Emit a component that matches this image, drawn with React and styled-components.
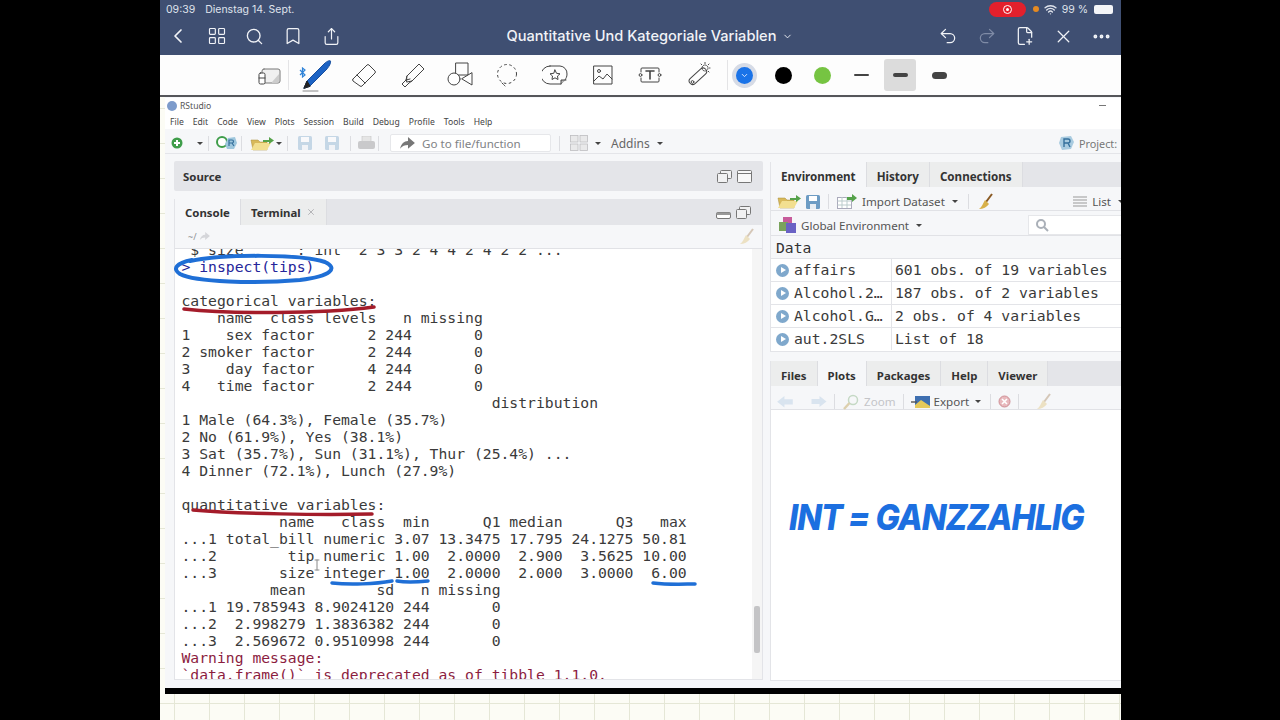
import React from 'react';
import styled, { createGlobalStyle } from 'styled-components';
import { ChevronLeft, LayoutGrid, Search, Bookmark, Share, Undo2, Redo2, FilePlus2, X, MoreHorizontal, ChevronDown, Wifi } from 'lucide-react';

const Global = createGlobalStyle`
  html, body { margin: 0; padding: 0; background: #000; overflow: hidden; }
  * { box-sizing: border-box; }
`;

const Page = styled.div`
  position: relative; width: 1280px; height: 720px; background: #000;
  display: flex; padding-left: 160px; overflow: hidden;
  font-family: "Noto Sans", sans-serif;
`;
const Tablet = styled.div`
  width: 961px; height: 720px; display: flex; flex-direction: column; overflow: hidden;
  background: #fcfcf5;
`;
const Header = styled.header`background: #3f4f72; color: #eef1f6; height: 55px; display: flex; flex-direction: column; flex: none;`;
const StatusBar = styled.div`
  height: 18px; display: flex; align-items: center; justify-content: space-between;
  padding: 0 8px 0 6px; font: 400 10.5px Inter, sans-serif; color: #dfe3ec;
`;
const StatusLeft = styled.div`display: flex; gap: 10px;`;
const StatusRight = styled.div`display: flex; align-items: center; gap: 5px;`;
const RecordPill = styled.div`
  width: 37px; height: 15px; border-radius: 8px; background: #e3202c;
  display: flex; align-items: center; justify-content: center; margin-right: 2px;
`;
const RecordDot = styled.span`
  width: 9px; height: 9px; border-radius: 50%; border: 1.5px solid #fff; display: flex; align-items: center; justify-content: center;
  &::after { content: ''; width: 3px; height: 3px; background: #fff; border-radius: 50%; }
`;
const OrangeDot = styled.span`width: 6px; height: 6px; border-radius: 50%; background: #e58a22;`;
const Battery = styled.span`width: 19px; height: 9px; background: #f4f5f8; border-radius: 2px; margin-left: 1px;`;
const NavBar = styled.div`flex: 1; display: flex; align-items: center; justify-content: space-between; padding-bottom: 1px;`;
const NavGroup = styled.div`display: flex; width: 192px; margin-left: ${p => p.$right ? 0 : -1}px;`;
const NavSlot = styled.div`width: 38.4px; display: flex; justify-content: center; align-items: center; color: ${p => p.$dim ? '#7f8ba6' : '#f1f3f7'};`;
const Title = styled.div`
  display: flex; align-items: center; gap: 6px; padding-left: 20px;
  font: 500 14.6px Inter, sans-serif; color: #f1f3f7; white-space: nowrap;
`;
const ToolTray = styled.div`
  height: 42px; flex: none; background: #fdfdfd; display: flex; align-items: center; padding-left: 85px;
  border-bottom: 2px solid #55565a;
`;
const ToolSlot = styled.div`width: 47.7px; display: flex; justify-content: center; align-items: center;`;
const TrayDivider = styled.div`width: 1px; height: 30px; background: #e4e4e6; margin: ${p => p.$m};`;
const ColorSlot = styled.div`
  width: 39px; height: 32px; display: flex; align-items: center; justify-content: center;
`;
const Swatch = styled.span`
  width: 17px; height: 17px; border-radius: 50%; background: ${p => p.$c};
  ${p => p.$ring && 'box-shadow: 0 0 0 4px #d6dbe6; display:flex; align-items:center; justify-content:center; color:#dbe8ff;'}
`;
const WidthBox = styled.span`
  width: 32px; height: 32px; border-radius: 3px; display: flex; align-items: center; justify-content: center;
  background: ${p => p.$on ? '#dcdcdc' : 'transparent'};
`;
const WidthBar = styled.span`width: ${p => p.$w}px; height: ${p => p.$h}px; border-radius: 4px; background: #444;`;

const Paper = styled.div`
  flex: 1; min-height: 0; padding-left: 5px; display: flex; flex-direction: column;
  background-color: #fcfcf5;
  background-image: linear-gradient(#e5e7d6 1px, transparent 1px), linear-gradient(90deg, #e5e7d6 1px, transparent 1px);
  background-size: 35px 35px;
  background-position: 0 11px, 14px 0;
`;
const RWindow = styled.div`
  width: 965px; height: 591px; background: #f6f7f9; display: flex; flex-direction: column; flex: none;
  color: #333;
`;
const TitleRow = styled.div`
  height: 15px; background: #fff; display: flex; align-items: center; gap: 3px; padding-left: 2px; margin-top: 1px;
  font: 400 8.6px "Noto Sans", sans-serif; color: #555; justify-content: space-between; padding-right: 24px;
`;
const TitleLeft = styled.div`display: flex; align-items: center; gap: 3px;`;
const AppDot = styled.span`width: 10px; height: 10px; border-radius: 50%; background: #7d9bcb;`;
const Minimize = styled.span`width: 7px; height: 1px; background: #777;`;
const MenuRow = styled.div`
  height: 16px; background: #fff; display: flex; align-items: center; gap: 9px; padding: 2px 0 0 5px;
  font: 400 8.6px "Noto Sans", sans-serif; color: #444;
`;
const ToolRow = styled.div`
  height: 23px; margin-top: 2px; border-bottom: 1px solid #e4e5e9; display: flex; align-items: center; padding: 2px 0 0 6px;
  font: 400 12px "Noto Sans", sans-serif; color: #666;
`;
const Spacer = styled.span`flex: none; width: ${p => p.$w}px;`;
const Sep = styled.span`width: 1px; height: 15px; background: #dcdde1; margin: 0 3px; flex: none;`;
const Caret = styled.span`
  width: 0; height: 0; border: 3px solid transparent; border-top: 3.5px solid #444; border-bottom: 0; margin: 0 2px; flex: none;
`;
const GoTo = styled.div`
  width: 161px; height: 18px; background: #fff; border: 1px solid #e6e7ea; border-radius: 2px; display: flex; align-items: center; gap: 7px;
  padding-left: 8px; color: #808285; font-size: 11.6px; flex: none;
`;
const ToolPush = styled.span`flex: 1;`;
const ProjectLabel = styled.div`display: flex; align-items: center; gap: 4px; color: #777; width: 71px; margin-right: 1px; white-space: nowrap; font-size: 10.8px;`;
const Panes = styled.div`
  flex: 1; min-height: 0; display: grid; grid-template-columns: 589px 360px; column-gap: 7px; padding: 7px 0 0 9px;
`;
const Column = styled.div`display: flex; flex-direction: column; min-height: 0; padding-top: ${p => p.$pt || 0}px;`;
const SourceBand = styled.div`
  height: 30px; background: #e4e5e9; border-radius: 2px; display: flex; align-items: center; justify-content: space-between;
  padding: 0 11px 0 9px; font: 700 11.4px "Noto Sans", sans-serif; color: #333; flex: none;
`;
const PaneButtons = styled.div`display: flex; align-items: center; gap: 5px;`;
const Pane = styled.section`
  background: #fff; display: flex; flex-direction: column; min-height: 0; margin-top: ${p => p.$mt || 0}px;
  height: ${p => p.$h}px; flex: none; border: 1px solid #e3e4e8; border-top: none; border-right-width: ${p => p.$nr ? 0 : 1}px;
`;
const TabBar = styled.div`
  height: ${p => p.$h || 26}px; background: #e4e5e9; display: flex; align-items: stretch; flex: none; justify-content: space-between; padding-right: 11px;
`;
const Tabs = styled.div`display: flex;`;
const Tab = styled.div`
  display: flex; align-items: center; gap: 5px; padding: ${p => p.$pt || 0}px ${p => p.$px || 10}px 0; white-space: nowrap;
  font: 700 ${p => p.$fs || 11.4}px "Noto Sans", sans-serif; color: #333;
  background: ${p => p.$on ? '#f6f7f9' : '#eceded'}; border-right: 1px solid #dcdde1;
`;
const PathBar = styled.div`
  height: 24px; background: #f6f7f9; border-bottom: 1px solid #e1e2e6; display: flex; align-items: center; justify-content: space-between;
  padding: 0 6px 0 13px; font-size: 9px; color: #8d8f93; flex: none;
`;
const PathLeft = styled.div`display: flex; align-items: center; gap: 2px;`;
const ConsoleBody = styled.div`position: relative; flex: 1; min-height: 0; overflow: hidden; padding-left: 6.5px;`;
const ConsoleText = styled.pre`
  margin: -8px 0 0 0; font: 400 14.72px/17px "DejaVu Sans Mono", monospace; color: #3a3a3a;
`;
const Line = styled.span`
  display: block; height: 17px;
  color: ${p => p.$c || 'inherit'};
`;
const Scroll = styled.div`
  position: absolute; right: 0; top: 0; bottom: 0; width: 10px; background: #f5f5f5;
  &::after { content: ''; position: absolute; left: 2px; right: 2px; top: 357px; height: 47px; background: #c4c4c6; border-radius: 2px; }
`;
const EnvTool = styled.div`
  height: ${p => p.$h}px; background: #f6f7f9; border-bottom: 1px solid #e1e2e6; display: flex; align-items: center; gap: ${p => p.$gap || 4}px; padding: ${p => p.$pt || 2}px ${p => p.$pr || 8}px 0 ${p => p.$pl || 8}px;
  font: 400 11.6px "Noto Sans", sans-serif; color: #555; flex: none; white-space: nowrap;
`;
const SearchBox = styled.div`
  width: 96px; height: 20px; background: #fff; border: 1px solid #e6e7ea; display: flex; align-items: center; padding-left: 6px; margin-right: -2px;
`;
const DataHead = styled.div`
  height: 22px; background: #f6f7f9; font: 400 14.72px/23px "DejaVu Sans Mono", monospace; padding-left: 5px; color: #333; flex: none;
`;
const EnvRow = styled.div`
  height: 23px; display: grid; grid-template-columns: 121px 1fr; border-top: 1px solid #e3e4e8; background: #fff;
  font: 400 14.72px/22px "DejaVu Sans Mono", monospace; color: #3a3a3a; flex: none; white-space: nowrap;
`;
const EnvName = styled.div`display: flex; align-items: center; gap: 5px; padding-left: 5px; border-right: 1px solid #e3e4e8;`;
const EnvValue = styled.div`padding-left: 3px;`;
const RowDot = styled.span`
  width: 13px; height: 13px; border-radius: 50%; background: #7fa8cc; display: flex; align-items: center; justify-content: center; flex: none;
  &::after { content: ''; border-left: 5px solid #fff; border-top: 3.5px solid transparent; border-bottom: 3.5px solid transparent; margin-left: 2px; }
`;
const Push = styled.span`flex: 1;`;
const Zoomed = styled.span`color: #c4c5c8;`;
const PlotArea = styled.div`
  flex: 1; background: #fff; padding: 89px 0 0 18px; overflow: hidden;
`;
const Ink = styled.div`
  font: italic 800 36px/36px Inter, sans-serif; color: #1c6fe0; white-space: nowrap; letter-spacing: -1.1px;
  transform-origin: 0 50%; transform: scaleX(0.9);
`;
const Marks = styled.svg`position: absolute; left: 0; top: 0; pointer-events: none;`;
const BlackRule = styled.div`height: 6px; width: 100%; background: #000; flex: none;`;
const BtPos = styled.div`position: absolute; left: 299px; top: 61px;`;

const G = ({ s = 20, w, h, children, vb }) => (
  <svg width={w || s} height={h || s} viewBox={vb || `0 0 ${s} ${s}`} fill="none" stroke="#444" strokeWidth="1" strokeLinecap="round" strokeLinejoin="round">{children}</svg>
);

const PageSwitch = () => <G s={24}><rect x="5" y="6" width="18" height="14" rx="2" fill="#f0f0f0" stroke="#777" /><path d="M15 19 L22 11 V18 a2 2 0 0 1-2 2 H15Z" fill="#ccc" stroke="none" /><rect x="2" y="10" width="6" height="11" rx="1.5" fill="#fff" /><path d="M2 15 H8" /></G>;
const Pen = () => (
  <G w={34} h={36} vb="0 0 34 36">
    <path d="M3 34 H18" stroke="#888" />
    <path d="M4 31 L7 24 L24 7 C27 4 30 3 30.5 4 C31 6 29 10 26 13 L10 29 Z" fill="#1d63c4" stroke="#174f9f" />
    <path d="M4 31 L7 24 L10 29Z" fill="#222" stroke="#222" />
  </G>
);
const Bt = () => <svg width="7" height="11" viewBox="0 0 7 11" fill="none" stroke="#2f83d8" strokeWidth="1.2"><path d="M1 3 L6 8 L3.5 10 V1 L6 3 L1 8" /></svg>;
const Eraser = () => <G s={26}><path d="M2 17 L16 3 a1.5 1.5 0 0 1 2 0 L24 9 a1.5 1.5 0 0 1 0 2 L11 24 a1.5 1.5 0 0 1-2 0 L2 19 a1.5 1.5 0 0 1 0-2Z" /><path d="M6 13 L14 21" /></G>;
const Highlighter = () => <G s={26}><path d="M8 14 L20 2 L25 7 L13 19 L8 20Z" /><path d="M8 14 L7 18 L3 22 L6 25 L10 21 L13 19" /><path d="M11 17 L7 18" /></G>;
const Shapes = () => <G s={26}><rect x="9" y="1" width="12" height="12" /><circle cx="7" cy="17" r="6" fill="#fff" /><path d="M25 11 V23 L15 17Z" fill="#fff" /></G>;
const Lasso = () => <G s={24}><ellipse cx="12" cy="11" rx="9.5" ry="9.5" strokeDasharray="2.6 2.6" strokeLinecap="butt" /><path d="M7 20 L10 23" strokeDasharray="2 1.5" /></G>;
const Sticker = () => <G w={26} h={22} vb="0 0 26 22"><path d="M8 2 H18 a7.5 7.5 0 0 1 7 8 c0 3 -1 4 -2 6 l-4 4 H8 a8 8 0 0 1 0-18Z" /><path d="M13 6 L14.5 9.3 L18 9.8 L15.5 12 L16 15.5 L13 13.8 L10 15.5 L10.5 12 L8 9.8 L11.5 9.3Z" /><path d="M19 20 V16 H24" fill="#bbb" /></G>;
const ImageIco = () => <G s={22}><rect x="2" y="2" width="18" height="18" /><circle cx="7" cy="7" r="1.5" /><path d="M2 17 L7 12 L11 15 L15 10 L20 15" /></G>;
const TextBox = () => <G w={24} h={20} vb="0 0 24 20"><path d="M3 7 V4 a1 1 0 0 1 1-1 H20 a1 1 0 0 1 1 1 V7 M3 13 V16 a1 1 0 0 0 1 1 H20 a1 1 0 0 0 1-1 V13" /><circle cx="2.5" cy="10" r="1.4" /><circle cx="21.5" cy="10" r="1.4" /><path d="M8 6 H16 M12 6 V14" strokeWidth="1.6" /></G>;
const Magic = () => <G s={26}><rect x="-1" y="0" width="21" height="7" rx="3.5" transform="translate(3.5 18) rotate(-42)" /><circle cx="7.5" cy="20" r="1.4" /><circle cx="20" cy="6" r="3" strokeDasharray="1 1" /><path d="M20 0.5 V1.5 M25 6 H24.5 M24 2 L23.3 2.7 M16 2 L16.7 2.7 M24 10 L23.3 9.3" /></G>;

const AddIcon = () => <svg width="12" height="12" viewBox="0 0 12 12" style={{ flex: 'none' }}><circle cx="6" cy="6" r="5.5" fill="#3f9d4a" /><path d="M3 6 H9 M6 3 V9" stroke="#fff" strokeWidth="2" /></svg>;
const ProjectIcon = () => <svg width="22" height="16" viewBox="0 0 22 16" style={{ flex: 'none' }}><circle cx="6" cy="7" r="5" fill="#fff" stroke="#3f9d4a" strokeWidth="2" /><path d="M12 3 L19 2 L21 8 L18 14 L11 14 L9 9Z" fill="#9fc7dd" /><path d="M13 11 V5 H16 a1.5 1.5 0 0 1 0 3 H13 M16 8 L18 11" stroke="#35709c" strokeWidth="1.2" fill="none" /></svg>;
const ProjectIcon2 = () => <svg width="17" height="16" viewBox="0 0 17 16" style={{ flex: 'none' }}><path d="M3 2 L13 1 L16 7 L13 14 L4 15 L1 8Z" fill="#a9cbe0" /><path d="M6 12 V4 H10 a2 2 0 0 1 0 4 H6 M10 8 L12 12" stroke="#35709c" strokeWidth="1.4" fill="none" /></svg>;
const Folder = () => <svg width="24" height="15" viewBox="0 0 24 15" style={{ flex: 'none' }}><path d="M1 4 H8 L10 6 H17 V14 H3Z" fill="#d8b95a" stroke="#a88c3a" strokeWidth=".5" /><path d="M1 14 L5 7 H21 L17 14Z" fill="#f2df90" /><path d="M13 4 H19 V1 L24 4.5 L19 8 V6 H13Z" fill="#55a24a" /></svg>;
const Save = ({ dim }) => <svg width="14" height="14" viewBox="0 0 14 14" opacity={dim ? .35 : 1} style={{ flex: 'none' }}><rect width="14" height="14" rx="1.5" fill="#6d9cc4" /><rect x="3" y="1" width="8" height="5" fill="#fff" /><rect x="4" y="9" width="6" height="5" fill="#e9eef4" /></svg>;
const Printer = () => <svg width="17" height="14" viewBox="0 0 17 14" style={{ flex: 'none' }}><rect x="4" y="0" width="9" height="6" fill="#e5e5e5" stroke="#c2c2c2" strokeWidth=".6" /><rect x="0" y="5" width="17" height="8" rx="2" fill="#c9c9cb" /></svg>;
const Arrow = ({ c = '#777', w = 16, flip }) => <svg width={w} height={w * .8} viewBox="0 0 16 13" style={{ flex: 'none' }}><path d={flip ? 'M0 6.5 L7 1 V4 H15 V9 H7 V12Z' : 'M1 12 C2 7 5 4 9 4 V0 L16 6 L9 12 V8 C6 8 3 9 1 12Z'} fill={c} /></svg>;
const ArrowR = ({ c }) => <svg width="17" height="13" viewBox="0 0 16 13" style={{ flex: 'none' }}><path d="M16 6.5 L9 1 V4 H1 V9 H9 V12Z" fill={c} /></svg>;
const Layout = () => <svg width="18" height="16" viewBox="0 0 18 16" fill="#e9e9ea" stroke="#bdbdc0" strokeWidth=".8" style={{ flex: 'none' }}><rect x=".5" y=".5" width="7.5" height="6.5" /><rect x="10" y=".5" width="7.5" height="6.5" /><rect x=".5" y="9" width="7.5" height="6.5" /><rect x="10" y="9" width="7.5" height="6.5" /></svg>;
const PaneBtns = ({ first }) => (
  <PaneButtons>
    {first === 'min'
      ? <svg width="15" height="7" viewBox="0 0 15 7" style={{ marginTop: 6 }}><rect x=".5" y=".5" width="14" height="6" rx="1.5" fill="#fff" stroke="#777" /><rect x=".5" y=".5" width="14" height="2.5" fill="#999" /></svg>
      : <svg width="15" height="13" viewBox="0 0 15 13" fill="#f1f1f2" stroke="#777"><rect x="3.5" y=".5" width="11" height="8" rx="1" /><rect x=".5" y="3.5" width="10" height="9" rx="1" /></svg>}
    {first === 'min'
      ? <svg width="15" height="13" viewBox="0 0 15 13" fill="#f1f1f2" stroke="#777"><rect x="3.5" y=".5" width="11" height="8" rx="1" /><rect x=".5" y="3.5" width="10" height="9" rx="1" /></svg>
      : <svg width="15" height="13" viewBox="0 0 15 13" fill="#f8f8f8" stroke="#777"><rect x=".5" y=".5" width="14" height="12" rx="1" /><path d="M1 3.5 H14" /></svg>}
  </PaneButtons>
);
const Broom = ({ dim }) => <svg width="18" height="18" viewBox="0 0 18 18" opacity={dim ? .3 : 1} style={{ flex: 'none' }}><path d="M15 1 L9 9" stroke="#8a5a24" strokeWidth="2" /><path d="M8 7 L12 11 C10 14 6 16 2 16 C5 14 6 10 8 7Z" fill="#d8b14a" /></svg>;
const Table = () => <svg width="20" height="15" viewBox="0 0 20 15" style={{ flex: 'none' }}><rect x=".5" y="3.5" width="14" height="11" fill="#fff" stroke="#aab" /><path d="M.5 7 H14 M.5 11 H14 M5 3 V14 M10 3 V14" stroke="#bcc" /><path d="M10 3 H15 V0 L20 4 L15 8 V6 H10Z" fill="#55a24a" /></svg>;
const Cube = () => <svg width="17" height="16" viewBox="0 0 17 16" style={{ flex: 'none' }}><rect x="4" y="0" width="9" height="9" fill="#c75b9b" /><rect x="0" y="5" width="9" height="9" fill="#7aa35c" /><rect x="7" y="6" width="10" height="10" fill="#6a62c4" /></svg>;
const ListIco = () => <svg width="14" height="11" viewBox="0 0 14 11" stroke="#999" style={{ flex: 'none' }}><path d="M0 1 H14 M0 4 H14 M0 7 H14 M0 10 H14" /></svg>;
const Lens = () => <svg width="14" height="14" viewBox="0 0 14 14" fill="none" stroke="#aab0b8" strokeWidth="2"><circle cx="6" cy="6" r="4" /><path d="M9 9 L13 13" /></svg>;
const ExportIco = () => <svg width="19" height="14" viewBox="0 0 19 14" style={{ flex: 'none' }}><rect x="4" y="1" width="15" height="12" fill="#3e6fb0" /><path d="M4 10 L10 5 L19 11 V13 H4Z" fill="#e5c95a" /><path d="M0 7 H6" stroke="#555" strokeWidth="1.4" /></svg>;
const DeleteIco = () => <svg width="13" height="13" viewBox="0 0 13 13" style={{ flex: 'none' }}><circle cx="6.5" cy="6.5" r="5.5" fill="#e8b9bd" stroke="#cf8f95" /><path d="M4 4 L9 9 M9 4 L4 9" stroke="#fff" strokeWidth="1.6" /></svg>;
const ZoomIco = () => <svg width="18" height="16" viewBox="0 0 18 16" fill="none" style={{ flex: 'none' }}><circle cx="11" cy="6" r="4.5" stroke="#c5d9c5" strokeWidth="1.5" /><path d="M7.5 9 L2 15" stroke="#ddd0ae" strokeWidth="2.5" /></svg>;

const menu = ['File', 'Edit', 'Code', 'View', 'Plots', 'Session', 'Build', 'Debug', 'Profile', 'Tools', 'Help'];
const consoleLines = [
  [' $ size      : int  2 3 3 2 4 4 2 4 2 2 ...'],
  ['> inspect(tips)', '#25259a'],
  [' '],
  ['categorical variables:'],
  ['    name  class levels   n missing'],
  ['1    sex factor      2 244       0'],
  ['2 smoker factor      2 244       0'],
  ['3    day factor      4 244       0'],
  ['4   time factor      2 244       0'],
  ['                                   distribution'],
  ['1 Male (64.3%), Female (35.7%)'],
  ['2 No (61.9%), Yes (38.1%)'],
  ['3 Sat (35.7%), Sun (31.1%), Thur (25.4%) ...'],
  ['4 Dinner (72.1%), Lunch (27.9%)'],
  [' '],
  ['quantitative variables:'],
  ['           name   class  min      Q1 median      Q3   max'],
  ['...1 total_bill numeric 3.07 13.3475 17.795 24.1275 50.81'],
  ['...2        tip numeric 1.00  2.0000  2.900  3.5625 10.00'],
  ['...3       size integer 1.00  2.0000  2.000  3.0000  6.00'],
  ['          mean        sd   n missing'],
  ['...1 19.785943 8.9024120 244       0'],
  ['...2  2.998279 1.3836382 244       0'],
  ['...3  2.569672 0.9510998 244       0'],
  ['Warning message:', '#8c1d3f'],
  ['`data.frame()` is deprecated as of tibble 1.1.0.', '#8c1d3f'],
];
const envRows = [
  ['affairs', '601 obs. of 19 variables'],
  ['Alcohol.2…', '187 obs. of 2 variables'],
  ['Alcohol.G…', '2 obs. of 4 variables'],
  ['aut.2SLS', 'List of 18'],
];

export default function App() {
  return (
    <Page>
      <Global />
      <Tablet>
        <Header>
          <StatusBar>
            <StatusLeft><span>09:39</span><span>Dienstag 14. Sept.</span></StatusLeft>
            <StatusRight>
              <RecordPill><RecordDot /></RecordPill>
              <OrangeDot />
              <Wifi size={13} strokeWidth={2.6} />
              <span>99 %</span>
              <Battery />
            </StatusRight>
          </StatusBar>
          <NavBar>
            <NavGroup>
              <NavSlot><ChevronLeft size={24} strokeWidth={1.7} /></NavSlot>
              <NavSlot><LayoutGrid size={20} strokeWidth={1.4} /></NavSlot>
              <NavSlot><Search size={19} strokeWidth={1.7} /></NavSlot>
              <NavSlot><Bookmark size={20} strokeWidth={1.5} /></NavSlot>
              <NavSlot><Share size={19} strokeWidth={1.5} /></NavSlot>
            </NavGroup>
            <Title>Quantitative Und Kategoriale Variablen <ChevronDown size={11} /></Title>
            <NavGroup $right>
              <NavSlot><Undo2 size={20} strokeWidth={1.5} /></NavSlot>
              <NavSlot $dim><Redo2 size={20} strokeWidth={1.5} /></NavSlot>
              <NavSlot><FilePlus2 size={20} strokeWidth={1.5} /></NavSlot>
              <NavSlot><X size={21} strokeWidth={1.5} /></NavSlot>
              <NavSlot><MoreHorizontal size={21} strokeWidth={2.4} /></NavSlot>
            </NavGroup>
          </NavBar>
        </Header>
        <ToolTray>
          <ToolSlot><PageSwitch /></ToolSlot>
          <TrayDivider $m="0 4px 0 -5px" />
          <ToolSlot><Pen /></ToolSlot>
          <ToolSlot><Eraser /></ToolSlot>
          <ToolSlot><Highlighter /></ToolSlot>
          <ToolSlot><Shapes /></ToolSlot>
          <ToolSlot><Lasso /></ToolSlot>
          <ToolSlot><Sticker /></ToolSlot>
          <ToolSlot><ImageIco /></ToolSlot>
          <ToolSlot><TextBox /></ToolSlot>
          <ToolSlot><Magic /></ToolSlot>
          <TrayDivider $m="0 -3px 0 5px" />
          <ColorSlot><Swatch $c="#1a73e8" $ring><ChevronDown size={9} strokeWidth={2.5} /></Swatch></ColorSlot>
          <ColorSlot><Swatch $c="#000" /></ColorSlot>
          <ColorSlot><Swatch $c="#76c442" /></ColorSlot>
          <ColorSlot><WidthBox><WidthBar $w={15} $h={2.5} /></WidthBox></ColorSlot>
          <ColorSlot><WidthBox $on><WidthBar $w={15} $h={4} /></WidthBox></ColorSlot>
          <ColorSlot><WidthBox><WidthBar $w={15} $h={7} /></WidthBox></ColorSlot>
        </ToolTray>
        <Paper>
          <RWindow>
            <TitleRow>
              <TitleLeft><AppDot />RStudio</TitleLeft>
              <Minimize />
            </TitleRow>
            <MenuRow>{menu.map(m => <span key={m}>{m}</span>)}</MenuRow>
            <ToolRow>
              <AddIcon /><Spacer $w={12} /><Caret /><Sep /><Spacer $w={4} />
              <ProjectIcon /><Sep /><Spacer $w={5} />
              <Folder /><Caret /><Sep /><Spacer $w={7} />
              <Save dim /><Spacer $w={13} /><Save dim /><Spacer $w={8} /><Sep /><Spacer $w={4} />
              <Printer /><Sep /><Spacer $w={8} />
              <GoTo><Arrow />Go to file/function</GoTo><Spacer $w={5} /><Sep /><Spacer $w={7} />
              <Layout /><Spacer $w={5} /><Caret /><Spacer $w={8} />Addins<Spacer $w={5} /><Caret />
              <ToolPush />
              <ProjectLabel><ProjectIcon2 />Project:</ProjectLabel>
            </ToolRow>
            <Panes>
              <Column>
                <SourceBand>Source<PaneBtns /></SourceBand>
                <Pane $mt={8} $h={481}>
                  <TabBar>
                    <Tabs>
                      <Tab $on>Console</Tab>
                      <Tab>Terminal <X size={10} color="#a9a9ad" strokeWidth={2} /></Tab>
                    </Tabs>
                    <PaneBtns first="min" />
                  </TabBar>
                  <PathBar>
                    <PathLeft>~/<Arrow c="#d5d6da" w={11} /></PathLeft>
                    <Broom dim />
                  </PathBar>
                  <ConsoleBody>
                    <ConsoleText>
                      {consoleLines.map(([t, c], i) => <Line key={i} $c={c}>{t}</Line>)}
                    </ConsoleText>
                    <Scroll />
                  </ConsoleBody>
                </Pane>
              </Column>
              <Column $pt={1}>
                <Pane $h={190} $nr>
                  <TabBar $h={25}>
                    <Tabs>
                      <Tab $on $fs={11.6} $pt={3}>Environment</Tab>
                      <Tab $fs={11.6} $pt={3}>History</Tab>
                      <Tab $fs={11.6} $pt={3}>Connections</Tab>
                    </Tabs>
                  </TabBar>
                  <EnvTool $h={24} $gap={5} $pl={6} $pt={6} $pr={4}>
                    <Folder /><Save /><Sep /><Table />Import Dataset<Caret /><Sep /><Broom />
                    <Push /><ListIco />List<Caret />
                  </EnvTool>
                  <EnvTool $h={25} $gap={5} $pl={8} $pt={4}>
                    <Cube />Global Environment<Caret />
                    <Push /><SearchBox><Lens /></SearchBox>
                  </EnvTool>
                  <DataHead>Data</DataHead>
                  {envRows.map(([a, b]) => (
                    <EnvRow key={a}>
                      <EnvName><RowDot />{a}</EnvName>
                      <EnvValue>{b}</EnvValue>
                    </EnvRow>
                  ))}
                </Pane>
                <Pane $mt={9} $h={320} $nr>
                  <TabBar $h={25}>
                    <Tabs>
                      <Tab $pt={3}>Files</Tab>
                      <Tab $on $pt={3}>Plots</Tab>
                      <Tab $pt={3}>Packages</Tab>
                      <Tab $pt={3}>Help</Tab>
                      <Tab $pt={3}>Viewer</Tab>
                    </Tabs>
                  </TabBar>
                  <EnvTool $h={24} $gap={4} $pl={6} $pt={8}>
                    <Arrow flip c="#d9e4ef" w={17} /><Spacer $w={8} /><ArrowR c="#d9e4ef" /><Sep /><ZoomIco /><Zoomed>Zoom</Zoomed><Sep /><ExportIco />Export<Caret /><Sep /><DeleteIco /><Sep /><Spacer $w={5} /><Broom dim />
                  </EnvTool>
                  <PlotArea><Ink>INT = GANZZAHLIG</Ink></PlotArea>
                </Pane>
              </Column>
            </Panes>
          </RWindow>
          <BlackRule />
        </Paper>
      </Tablet>
      <Marks width="1280" height="720" viewBox="0 0 1280 720" fill="none" strokeLinecap="round">
        <path d="M190 261 C225 254 300 254 325 262 C338 268 332 276 300 280 C255 284 195 282 180 274 C172 269 176 263 192 260" stroke="#1f6fd6" strokeWidth="4" />
        <path d="M184 309 C230 314 320 314 374 307" stroke="#a41c2a" strokeWidth="3.5" />
        <path d="M193 510 C240 514 320 515 372 514" stroke="#a41c2a" strokeWidth="3.5" />
        <path d="M332 583 C350 585 375 584 392 581" stroke="#1f6fd6" strokeWidth="3.5" />
        <path d="M397 581 C408 583 418 582 428 581" stroke="#1f6fd6" strokeWidth="3.5" />
        <path d="M653 583 C670 585 685 584 695 584" stroke="#1f6fd6" strokeWidth="3.5" />
        <path d="M315 560 H319 M317 560 V570 M315 570 H319" stroke="#8a8a8a" strokeWidth="1" />
      </Marks>
      <BtPos><Bt /></BtPos>
    </Page>
  );
}
